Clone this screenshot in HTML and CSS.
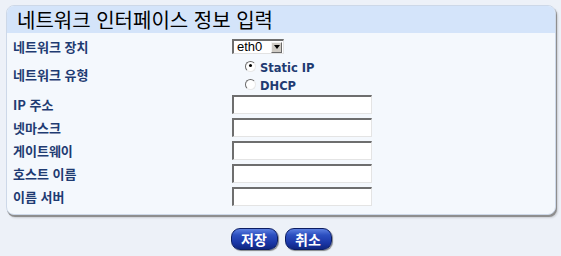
FILE: index.html
```html
<!DOCTYPE html>
<html lang="ko">
<head>
<meta charset="utf-8">
<title>네트워크 인터페이스 정보 입력</title>
<link rel="stylesheet" href="styles.css">
</head>
<body>
<div class="panel">
  <div class="panel-title">네트워크 인터페이스 정보 입력</div>
  <div class="panel-body">
    <div class="row row-device">
      <div class="label">네트워크 장치</div>
      <div class="control">
        <div class="select">
          <span class="select-value">eth0</span>
          <span class="select-btn"><span class="tri"></span></span>
        </div>
      </div>
    </div>
    <div class="row row-type">
      <div class="label label-type">네트워크 유형</div>
      <div class="control radios">
        <label class="radio"><span class="dot checked"></span><span>Static IP</span></label>
        <label class="radio"><span class="dot"></span><span>DHCP</span></label>
      </div>
    </div>
    <div class="row row-input">
      <div class="label">IP 주소</div>
      <div class="control"><span class="input"></span></div>
    </div>
    <div class="row row-input">
      <div class="label">넷마스크</div>
      <div class="control"><span class="input"></span></div>
    </div>
    <div class="row row-input">
      <div class="label">게이트웨이</div>
      <div class="control"><span class="input"></span></div>
    </div>
    <div class="row row-input">
      <div class="label">호스트 이름</div>
      <div class="control"><span class="input"></span></div>
    </div>
    <div class="row row-input">
      <div class="label">이름 서버</div>
      <div class="control"><span class="input"></span></div>
    </div>
  </div>
</div>
<div class="buttons">
  <span class="btn">저장</span>
  <span class="btn">취소</span>
</div>
</body>
</html>
```

FILE: styles.css
```css
html, body {
  margin: 0;
  padding: 0;
}
body {
  background: #edf1f8;
  font-family: "Noto Sans CJK KR", "Noto Sans", sans-serif;
  padding: 5px 0 0 6px;
  width: 561px;
  height: 256px;
  box-sizing: border-box;
}
.panel {
  width: 550px;
  box-sizing: border-box;
  background: #f4f8fd;
  border: 1px solid #cdd8e8;
  border-radius: 8px;
  overflow: hidden;
  box-shadow: 1px 2px 0 #8e8e8e, 2px 3px 2px rgba(0,0,0,0.15);
}
.panel-title {
  height: 27px;
  background: #d4e4fa;
  font-size: 20px;
  line-height: 27px;
  color: #000;
  padding-left: 10px;
  white-space: nowrap;
}
.panel-body {
  padding: 6px 0 8px 6px;
}
.row {
  display: flex;
  align-items: center;
}
.label {
  width: 219px;
  flex: none;
  font-size: 13px;
  font-weight: 700;
  color: #1f3b72;
  white-space: nowrap;
  line-height: 15px;
}
.row-device {
  height: 15px;
  margin-bottom: 5px;
}
.row-type {
  height: 36px;
}
.label-type {
  padding-bottom: 6px;
}
.row-input {
  height: 19px;
  margin-bottom: 4px;
}
.row-input:last-child {
  margin-bottom: 0;
}
.select {
  display: flex;
  align-items: center;
  width: 52px;
  height: 15px;
  box-sizing: border-box;
  background: #fff;
  border-top: 2px solid #6e6e6e;
  border-left: 2px solid #6e6e6e;
  border-right: 1px solid #e2e2e2;
  border-bottom: 1px solid #e2e2e2;
}
.select-value {
  flex: 1;
  font-family: "Liberation Sans", Arial, sans-serif;
  font-size: 13px;
  line-height: 12px;
  padding-left: 3px;
  color: #000;
}
.select-btn {
  width: 11px;
  height: 11px;
  margin-right: 1px;
  background: #cfcbc4;
  border-top: 1px solid #f2f2f2;
  border-left: 1px solid #f2f2f2;
  border-right: 1px solid #6a6a6a;
  border-bottom: 1px solid #6a6a6a;
  box-sizing: border-box;
  display: flex;
  align-items: center;
  justify-content: center;
}
.tri {
  width: 0;
  height: 0;
  border-left: 3px solid transparent;
  border-right: 3px solid transparent;
  border-top: 4px solid #000;
}
.radios {
  display: flex;
  flex-direction: column;
  padding-left: 13px;
}
.radio {
  display: flex;
  align-items: center;
  height: 18px;
  font-family: "DejaVu Sans", sans-serif;
  font-size: 11.5px;
  font-weight: 700;
  color: #1f3b72;
  gap: 4px;
}
.dot {
  width: 11px;
  height: 11px;
  box-sizing: border-box;
  border-radius: 50%;
  background: #fff;
  border-top: 1.5px solid #6a6a6a;
  border-left: 1.5px solid #6a6a6a;
  border-right: 1.5px solid #e8e8e8;
  border-bottom: 1.5px solid #e8e8e8;
  position: relative;
  margin-top: -4px;
}
.dot.checked::after {
  content: "";
  position: absolute;
  left: 2.5px;
  top: 2.5px;
  width: 3px;
  height: 3px;
  border-radius: 50%;
  background: #000;
}
.input {
  display: block;
  width: 140px;
  height: 19px;
  box-sizing: border-box;
  background: #fff;
  border-top: 2px solid #6e6e6e;
  border-left: 2px solid #6e6e6e;
  border-right: 1px solid #e4e4e4;
  border-bottom: 1px solid #e4e4e4;
}
.buttons {
  display: flex;
  justify-content: center;
  gap: 7px;
  margin-top: 13px;
  width: 550px;
}
.btn {
  display: flex;
  align-items: center;
  justify-content: center;
  width: 47px;
  height: 22px;
  box-sizing: border-box;
  border-radius: 9px;
  border: 1px solid #0c1d63;
  background: linear-gradient(#5d80e0 0%, #2c4fc0 30%, #1a36a6 70%, #0f2680 100%);
  box-shadow: 1px 1px 1px rgba(0,0,0,0.45);
  color: #fff;
  font-size: 14px;
  font-weight: 700;
  line-height: 1;
}
```
